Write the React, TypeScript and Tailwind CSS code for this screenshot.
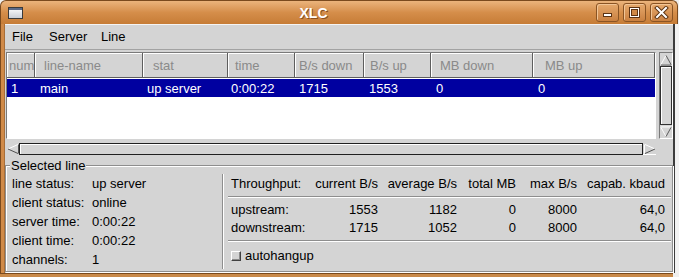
import React from "react";

const cols = [
  { w: "w-[28px]", h: "num", hp: "pl-[2px]", v: "1", vp: "pl-[4px]" },
  { w: "w-[108px]", h: "line-name", hp: "pl-[9px]", v: "main", vp: "pl-[5px]" },
  { w: "w-[85px]", h: "stat", hp: "pl-[10px]", v: "up server", vp: "pl-[4px]" },
  { w: "w-[67px]", h: "time", hp: "pl-[7px]", v: "0:00:22", vp: "pl-[3px]" },
  { w: "w-[69px]", h: "B/s down", hp: "pl-[4px]", v: "1715", vp: "pl-[4px]" },
  { w: "w-[67px]", h: "B/s up", hp: "pl-[6px]", v: "1553", vp: "pl-[5px]" },
  { w: "w-[102px]", h: "MB down", hp: "pl-[9px]", v: "0", vp: "pl-[5px]" },
  { w: "w-[122px]", h: "MB up", hp: "pl-[12px]", v: "0", vp: "pl-[5px]" },
];

function ArrowUp() {
  return (
    <svg width="13" height="12" viewBox="0 0 13 12">
      <line x1="6.5" y1="1" x2="1" y2="11" stroke="#ffffff" strokeWidth="1" />
      <line x1="6.5" y1="1" x2="12" y2="11" stroke="#505050" strokeWidth="1" />
      <line x1="1" y1="11.5" x2="12" y2="11.5" stroke="#505050" strokeWidth="1" />
    </svg>
  );
}
function ArrowDown() {
  return (
    <svg width="13" height="12" viewBox="0 0 13 12">
      <line x1="1" y1="0.5" x2="12" y2="0.5" stroke="#ffffff" strokeWidth="1" />
      <line x1="1" y1="1" x2="6.5" y2="11" stroke="#ffffff" strokeWidth="1" />
      <line x1="12" y1="1" x2="6.5" y2="11" stroke="#505050" strokeWidth="1" />
    </svg>
  );
}
function ArrowLeft() {
  return (
    <svg width="12" height="10" viewBox="0 0 12 10">
      <line x1="1" y1="5" x2="11" y2="0.5" stroke="#ffffff" strokeWidth="1" />
      <line x1="1" y1="5" x2="11" y2="9.5" stroke="#505050" strokeWidth="1" />
      <line x1="11.5" y1="0.5" x2="11.5" y2="9.5" stroke="#505050" strokeWidth="1" />
    </svg>
  );
}
function ArrowRight() {
  return (
    <svg width="12" height="10" viewBox="0 0 12 10">
      <line x1="0.5" y1="0.5" x2="0.5" y2="9.5" stroke="#ffffff" strokeWidth="1" />
      <line x1="1" y1="0.5" x2="11" y2="5" stroke="#ffffff" strokeWidth="1" />
      <line x1="1" y1="9.5" x2="11" y2="5" stroke="#505050" strokeWidth="1" />
    </svg>
  );
}

function TitleButton({ kind }: { kind: "min" | "max" | "close" }) {
  return (
    <div className="w-[23px] h-[19px] rounded-[3px] border border-[#8a5424] bg-gradient-to-b from-[#e6a96c] to-[#c98040] shadow-[inset_1px_1px_0_#f2c596] flex items-center justify-center">
      <svg width="15" height="13" viewBox="0 0 15 13">
        {kind === "min" && (
          <rect x="3.5" y="7.5" width="8" height="3" fill="#ffffff" stroke="#5c3414" strokeWidth="1" />
        )}
        {kind === "max" && (
          <g>
            <rect x="2.5" y="1.5" width="10" height="10" fill="#ffffff" stroke="#5c3414" strokeWidth="1" />
            <rect x="4.5" y="3.5" width="6" height="6" fill="#cf8846" stroke="#5c3414" strokeWidth="1" />
          </g>
        )}
        {kind === "close" && (
          <g>
            <path d="M3 2 L12 11 M12 2 L3 11" stroke="#5c3414" strokeWidth="4" strokeLinecap="square" />
            <path d="M3 2 L12 11 M12 2 L3 11" stroke="#ffffff" strokeWidth="2" strokeLinecap="square" />
          </g>
        )}
      </svg>
    </div>
  );
}

const thr = [
  { w: "w-[80px]", a: "text-left" },
  { w: "w-[67px]", a: "text-right" },
  { w: "w-[79px]", a: "text-right" },
  { w: "w-[59px]", a: "text-right" },
  { w: "w-[61px]", a: "text-right" },
  { w: "w-[88px]", a: "text-right" },
];

function ThrRow({ cells, h }: { cells: string[]; h: string }) {
  return (
    <div className={`flex items-center ${h} pl-[7px]`}>
      {cells.map((c, i) => (
        <div key={i} className={`${thr[i].w} ${thr[i].a} whitespace-nowrap`}>
          {c}
        </div>
      ))}
    </div>
  );
}

export default function App() {
  const info = [
    ["line status:", "up server"],
    ["client status:", "online"],
    ["server time:", "0:00:22"],
    ["client time:", "0:00:22"],
    ["channels:", "1"],
  ];
  return (
    <div className="w-[679px] h-[277px] bg-[#efefef] overflow-hidden font-['Liberation_Sans',Arial,sans-serif] text-[13px] leading-none text-black">
      {/* Title bar */}
      <div className="h-[24px] w-[678px] rounded-t-[6px] border border-b-0 border-[#7a4a1e] bg-gradient-to-b from-[#ebb47c] via-[#d58e4a] to-[#c67c36] flex items-center">
        <div className="w-[26px] pl-[7px] flex items-center">
          <svg width="15" height="12" viewBox="0 0 15 12">
            <defs>
              <linearGradient id="wi" x1="0" y1="0" x2="0" y2="1">
                <stop offset="0" stopColor="#ffffff" />
                <stop offset="1" stopColor="#c8ccd4" />
              </linearGradient>
            </defs>
            <rect x="0.5" y="0.5" width="14" height="11" fill="url(#wi)" stroke="#3a3a3a" />
            <rect x="1" y="1" width="13" height="2" fill="#5a6a88" />
          </svg>
        </div>
        <div className="flex-1 text-center pl-[4px] font-bold text-white text-[14px] [text-shadow:1px_1px_0_#8a5020]">
          XLC
        </div>
        <div className="flex gap-[4px] pr-[4px]">
          <TitleButton kind="min" />
          <TitleButton kind="max" />
          <TitleButton kind="close" />
        </div>
      </div>

      <div className="flex h-[249px]">
        <div className="w-[5px] bg-[#d08a48] border-l border-r border-l-[#7a4a1e] border-r-[#a86e38]" />
        <div className="w-[668px] bg-[#d4d4d4] flex flex-col">
          {/* Menu bar */}
          <div className="h-[26px] flex items-center border-b border-[#a2a2a2] shadow-[inset_0_1px_0_#f4f4f4] pl-[7px]">
            <span className="w-[37px]">File</span>
            <span className="w-[52px]">Server</span>
            <span>Line</span>
          </div>

          {/* Table + vertical scrollbar */}
          <div className="mt-[2px] flex h-[87px]">
            <div className="ml-[1px] w-[650px] h-[87px] border border-t-[#7a7a7a] border-l-[#7a7a7a] border-r-white border-b-white bg-white flex flex-col">
              <div className="flex h-[25px] bg-[#d4d4d4]">
                {cols.map((c, i) => (
                  <div
                    key={i}
                    className={`${c.w} ${c.hp} h-[25px] flex items-center overflow-hidden whitespace-nowrap text-[#8a8a8a] border-r border-b border-[#5e5e5e] shadow-[inset_1px_1px_0_#ffffff]`}
                  >
                    {c.h}
                  </div>
                ))}
              </div>
              <div className="h-[1px] bg-white" />
              <div className="flex h-[18px] bg-[#0000a0] text-white">
                {cols.map((c, i) => (
                  <div key={i} className={`${c.w} ${c.vp} flex items-center whitespace-nowrap overflow-hidden`}>
                    {c.v}
                  </div>
                ))}
              </div>
            </div>
            <div className="ml-[3px] w-[14px] h-[87px] flex flex-col border border-t-[#7a7a7a] border-l-[#7a7a7a] border-r-white border-b-white">
              <div className="h-[13px] flex items-center justify-center">
                <ArrowUp />
              </div>
              <div className="flex-1 border border-[#303030] bg-[#d4d4d4] shadow-[inset_1px_1px_0_#ffffff]" />
              <div className="h-[13px] flex items-center justify-center">
                <ArrowDown />
              </div>
            </div>
          </div>

          {/* Horizontal scrollbar */}
          <div className="mt-[4px] ml-[1px] w-[650px] h-[12px] flex items-center">
            <div className="w-[13px] h-[12px] flex items-center justify-center">
              <ArrowLeft />
            </div>
            <div className="flex-1 h-[12px] border-y border-x border-[#202020] bg-[#d4d4d4] shadow-[inset_1px_1px_0_#ffffff]" />
            <div className="w-[13px] h-[12px] flex items-center justify-center border-b border-white">
              <ArrowRight />
            </div>
          </div>

          {/* Group box */}
          <div className="mt-[10px] relative h-[107px] border border-[#8e8e8e] shadow-[inset_1px_1px_0_#ffffff,1px_1px_0_#ffffff] flex">
            <div className="absolute -top-[7px] left-[4px] bg-[#d4d4d4] px-[1px] leading-[14px]">
              Selected line
            </div>
            <div className="w-[216px] pt-[8px] pl-[6px] flex flex-col">
              {info.map(([k, v]) => (
                <div key={k} className="h-[19px] flex items-center whitespace-nowrap">
                  <span className="w-[80px]">{k}</span>
                  <span>{v}</span>
                </div>
              ))}
            </div>
            <div className="mt-[8px] mb-[2px] w-[2px] border-l border-[#8e8e8e] bg-white" />
            <div className="flex-1 pt-[8px] flex flex-col">
              <ThrRow
                h="h-[19px]"
                cells={["Throughput:", "current B/s", "average B/s", "total MB", "max B/s", "capab. kbaud"]}
              />
              <div className="mt-[3px] ml-[4px] mr-[1px] h-[2px] border-t border-[#8e8e8e] bg-white" />
              <div className="mt-[2px]" />
              <ThrRow h="h-[18px]" cells={["upstream:", "1553", "1182", "0", "8000", "64,0"]} />
              <ThrRow h="h-[18px]" cells={["downstream:", "1715", "1052", "0", "8000", "64,0"]} />
              <div className="mt-[4px] ml-[4px] mr-[1px] h-[2px] border-t border-[#8e8e8e] bg-white" />
              <div className="mt-[4px] h-[19px] flex items-center pl-[7px]">
                <div className="w-[10px] h-[10px] border border-t-white border-l-white border-r-[#404040] border-b-[#404040] bg-[#d4d4d4] shadow-[inset_-1px_-1px_0_#8a8a8a]" />
                <span className="ml-[4px]">autohangup</span>
              </div>
            </div>
          </div>
        </div>
        <div className="w-[6px] flex">
          <div className="w-[2px] bg-[#3c3c3c]" />
          <div className="flex-1 bg-[#f2f2f2]" />
        </div>
      </div>
      <div className="h-[4px] w-[673px] bg-[#c98a4a] border-t border-[#7a4a1e]" />
    </div>
  );
}
